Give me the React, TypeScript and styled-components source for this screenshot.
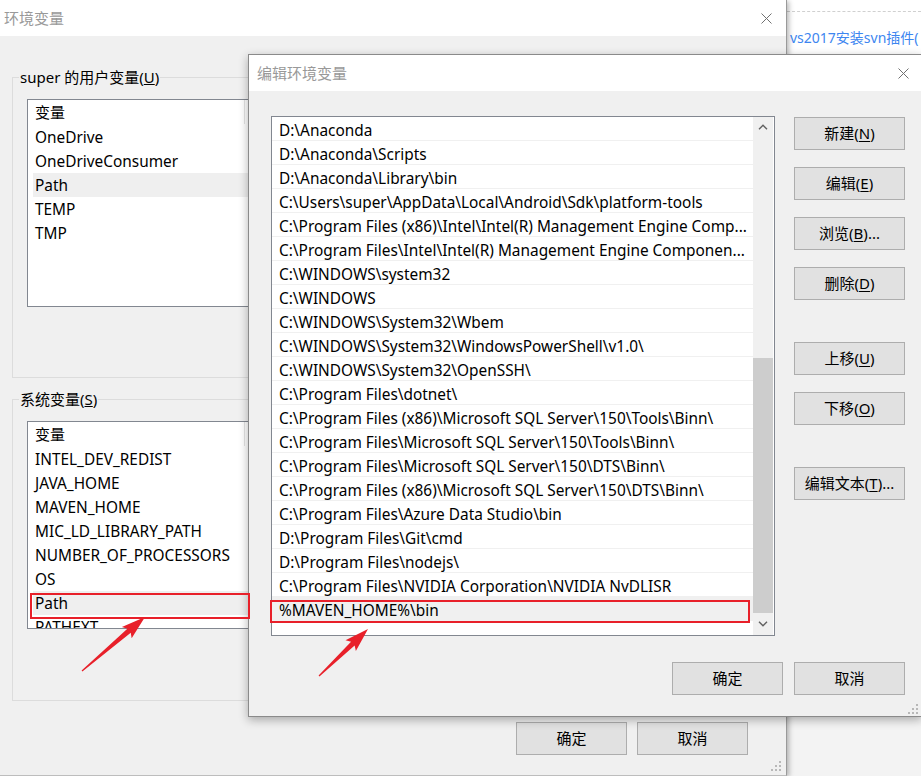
import React from "react";
import styled, { createGlobalStyle } from "styled-components";

const FONT = `"Noto Sans", "Noto Sans CJK SC", sans-serif`;

const GlobalStyle = createGlobalStyle`
  html, body { margin: 0; padding: 0; }
  body {
    width: 921px; height: 776px; overflow: hidden;
    background: #f3f3f3;
    font-family: ${FONT};
    font-size: 15px;
    color: #000;
  }
  * { box-sizing: border-box; }
`;

const Desktop = styled.div`
  position: relative;
  width: 921px;
  height: 776px;
  overflow: hidden;
  background: #f3f3f3;
`;

const WebScrap = styled.div`
  position: absolute;
  left: 787px;
  top: 0;
  width: 134px;
  height: 110px;
  background: #fff;
  display: flex;
  flex-direction: column;
`;

const DashedRule = styled.div`
  margin-top: 11px;
  height: 0;
  border-top: 1px dashed #d0d0d0;
`;

const WebLink = styled.div`
  margin: 15px 0 0 3px;
  line-height: 22px;
  font-size: 14px;
  color: #3d86f0;
  white-space: nowrap;
`;

const Window = styled.div`
  position: absolute;
  left: -8px;
  top: 0;
  width: 795px;
  height: 776px;
  display: flex;
  flex-direction: column;
  background: #f0f0f0;
  border-right: 1px solid #9a9a9a;
  border-bottom: 1px solid #bdbdbd;
  box-shadow: 2px 1px 5px rgba(0, 0, 0, 0.28);
`;

const Dialog = styled.div`
  position: absolute;
  left: 248px;
  top: 54px;
  width: 674px;
  height: 663px;
  display: flex;
  flex-direction: column;
  background: #f0f0f0;
  border: 1px solid #8a8a8a;
  box-shadow: 0 3px 9px rgba(0, 0, 0, 0.3);
`;

const TitleBar = styled.div<{ $left: number; $right: number }>`
  flex: none;
  height: 36px;
  background: #fff;
  display: flex;
  align-items: center;
  justify-content: space-between;
  padding: 0 ${(p) => p.$right}px 0 ${(p) => p.$left}px;
`;

const TitleText = styled.span`
  color: #999;
  font-size: 15px;
  line-height: 20px;
`;

const WindowBody = styled.div`
  flex: 1;
  display: flex;
  flex-direction: column;
  padding-left: 20px;
`;

const GroupBox = styled.div<{ $mt: number; $h: number }>`
  position: relative;
  margin-top: ${(p) => p.$mt}px;
  height: ${(p) => p.$h}px;
  width: 770px;
  border: 1px solid #dcdcdc;
  padding: 21px 0 0 14px;
`;

const GroupLegend = styled.span`
  position: absolute;
  left: 6px;
  top: -11px;
  padding: 0 1px;
  background: #f0f0f0;
  line-height: 20px;
  font-size: 15px;
  white-space: nowrap;
`;

const VarList = styled.div`
  width: 760px;
  height: 208px;
  border: 1px solid #828790;
  background: #fff;
  overflow: hidden;
  font-size: 15.4px;
`;

const VarHeader = styled.div`
  display: flex;
  height: 25px;
`;

const HeaderCell = styled.div`
  width: 217px;
  padding-left: 7px;
  line-height: 25px;
  border-right: 1px solid #e3e3e3;
  height: 24px;
  font-size: 15px;
`;

const VarRow = styled.div<{ $selected?: boolean }>`
  height: 24px;
  padding-top: 1px;
  line-height: 23px;
  margin-left: 5px;
  padding-left: 2px;
  white-space: nowrap;
  background: ${(p) => (p.$selected ? "#efefef" : "transparent")};
`;

const Footer = styled.div<{ $mt: number; $pr: number; $gap: number }>`
  display: flex;
  justify-content: flex-end;
  gap: ${(p) => p.$gap}px;
  margin-top: ${(p) => p.$mt}px;
  padding-right: ${(p) => p.$pr}px;
`;

const WinButton = styled.button<{ $mt?: number }>`
  flex: none;
  width: 111px;
  height: 33px;
  margin: ${(p) => p.$mt ?? 0}px 0 0 0;
  padding: 0 0 1px 0;
  border: 1px solid #adadad;
  background: #e1e1e1;
  font-family: ${FONT};
  font-size: 15px;
  color: #000;
  line-height: 20px;
  u { text-underline-offset: 2px; }
`;

const DialogBody = styled.div`
  flex: 1;
  display: flex;
  flex-direction: column;
  padding: 25px 16px 0 22px;
`;

const MainRow = styled.div`
  display: flex;
  gap: 19px;
`;

const PathList = styled.div`
  flex: none;
  width: 504px;
  height: 520px;
  display: flex;
  border: 1px solid #828790;
  background: #fff;
`;

const PathRows = styled.div`
  flex: 1;
  min-width: 0;
  overflow: hidden;
`;

const PathRow = styled.div<{ $selected?: boolean }>`
  height: 24px;
  padding: 3px 2px 0 7px;
  line-height: 22px;
  font-size: 15.4px;
  border-bottom: 1px solid #f0f0f0;
  white-space: nowrap;
  overflow: hidden;
  background: ${(p) => (p.$selected ? "#f0f0f0" : "#fff")};
`;

const ScrollBar = styled.div`
  flex: none;
  width: 20px;
  margin-right: 1px;
  display: flex;
  flex-direction: column;
  background: #f0f0f0;
`;

const ScrollArrow = styled.div<{ $h: number }>`
  height: ${(p) => p.$h}px;
  display: flex;
  align-items: center;
  justify-content: center;
`;

const ScrollGap = styled.div<{ $h: number }>`
  height: ${(p) => p.$h}px;
`;

const ScrollThumb = styled.div<{ $h: number }>`
  height: ${(p) => p.$h}px;
  background: #cdcdcd;
`;

const ButtonColumn = styled.div`
  display: flex;
  flex-direction: column;
  padding-top: 1px;
`;

const Grip = styled.svg<{ $r: number; $b: number }>`
  position: absolute;
  right: ${(p) => p.$r}px;
  bottom: ${(p) => p.$b}px;
  width: 10px;
  height: 10px;
`;

const Annotations = styled.svg`
  position: absolute;
  left: 0;
  top: 0;
  width: 921px;
  height: 776px;
  pointer-events: none;
`;

const CloseIcon = () => (
  <svg width="11" height="11" viewBox="0 0 11 11">
    <path d="M0.5 0.5 L10.5 10.5 M10.5 0.5 L0.5 10.5" stroke="#707070" strokeWidth="1" fill="none" />
  </svg>
);

const GripDots = ({ r, b }: { r: number; b: number }) => (
  <Grip $r={r} $b={b} viewBox="0 0 10 10">
    {[
      [8, 0],
      [4, 4],
      [8, 4],
      [0, 8],
      [4, 8],
      [8, 8],
    ].map(([x, y], i) => (
      <rect key={i} x={x} y={y} width="2" height="2" fill="#b8b8b8" />
    ))}
  </Grip>
);

const Chevron = ({ up }: { up: boolean }) => (
  <svg width="10" height="6" viewBox="0 0 10 6">
    <path
      d={up ? "M1 5.2 L5 1.2 L9 5.2" : "M1 0.8 L5 4.8 L9 0.8"}
      stroke="#606060"
      strokeWidth="1.4"
      fill="none"
    />
  </svg>
);

const Arrow = ({ tx, ty, fx, fy }: { tx: number; ty: number; fx: number; fy: number }) => {
  const dx = tx - fx;
  const dy = ty - fy;
  const len = Math.sqrt(dx * dx + dy * dy);
  const ang = (Math.atan2(dy, dx) * 180) / Math.PI;
  const pts = [
    [-len, -0.6],
    [-21, -2.6],
    [-24, -7.5],
    [0, 0],
    [-24, 7.5],
    [-21, 2.6],
    [-len, 0.6],
  ]
    .map(([x, y]) => `${x},${y}`)
    .join(" ");
  return (
    <g transform={`translate(${tx} ${ty}) rotate(${ang})`}>
      <polygon points={pts} fill="#e8202a" />
    </g>
  );
};

const userVars = ["OneDrive", "OneDriveConsumer", "Path", "TEMP", "TMP"];
const sysVars = [
  "INTEL_DEV_REDIST",
  "JAVA_HOME",
  "MAVEN_HOME",
  "MIC_LD_LIBRARY_PATH",
  "NUMBER_OF_PROCESSORS",
  "OS",
  "Path",
  "PATHEXT",
];

const paths = [
  "D:\\Anaconda",
  "D:\\Anaconda\\Scripts",
  "D:\\Anaconda\\Library\\bin",
  "C:\\Users\\super\\AppData\\Local\\Android\\Sdk\\platform-tools",
  "C:\\Program Files (x86)\\Intel\\Intel(R) Management Engine Comp...",
  "C:\\Program Files\\Intel\\Intel(R) Management Engine Componen...",
  "C:\\WINDOWS\\system32",
  "C:\\WINDOWS",
  "C:\\WINDOWS\\System32\\Wbem",
  "C:\\WINDOWS\\System32\\WindowsPowerShell\\v1.0\\",
  "C:\\WINDOWS\\System32\\OpenSSH\\",
  "C:\\Program Files\\dotnet\\",
  "C:\\Program Files (x86)\\Microsoft SQL Server\\150\\Tools\\Binn\\",
  "C:\\Program Files\\Microsoft SQL Server\\150\\Tools\\Binn\\",
  "C:\\Program Files\\Microsoft SQL Server\\150\\DTS\\Binn\\",
  "C:\\Program Files (x86)\\Microsoft SQL Server\\150\\DTS\\Binn\\",
  "C:\\Program Files\\Azure Data Studio\\bin",
  "D:\\Program Files\\Git\\cmd",
  "D:\\Program Files\\nodejs\\",
  "C:\\Program Files\\NVIDIA Corporation\\NVIDIA NvDLISR",
  "%MAVEN_HOME%\\bin",
];

const sideButtons: { label: string; key: string; tail?: string; mt: number }[] = [
  { label: "新建", key: "N", mt: 0 },
  { label: "编辑", key: "E", mt: 17 },
  { label: "浏览", key: "B", tail: "...", mt: 17 },
  { label: "删除", key: "D", mt: 17 },
  { label: "上移", key: "U", mt: 42 },
  { label: "下移", key: "O", mt: 17 },
  { label: "编辑文本", key: "T", tail: "...", mt: 42 },
];

export default function App() {
  return (
    <>
      <GlobalStyle />
      <Desktop>
        <WebScrap>
          <DashedRule />
          <WebLink>vs2017安装svn插件(</WebLink>
        </WebScrap>

        <Window>
          <TitleBar $left={12} $right={14}>
            <TitleText>环境变量</TitleText>
            <CloseIcon />
          </TitleBar>
          <WindowBody>
            <GroupBox $mt={41} $h={301}>
              <GroupLegend>
                super 的用户变量(<u>U</u>)
              </GroupLegend>
              <VarList>
                <VarHeader>
                  <HeaderCell>变量</HeaderCell>
                </VarHeader>
                {userVars.map((v) => (
                  <VarRow key={v} $selected={v === "Path"}>
                    {v}
                  </VarRow>
                ))}
              </VarList>
            </GroupBox>
            <GroupBox $mt={21} $h={302}>
              <GroupLegend>
                系统变量(<u>S</u>)
              </GroupLegend>
              <VarList>
                <VarHeader>
                  <HeaderCell>变量</HeaderCell>
                </VarHeader>
                {sysVars.map((v) => (
                  <VarRow key={v} $selected={v === "Path"}>
                    {v}
                  </VarRow>
                ))}
              </VarList>
            </GroupBox>
            <Footer $mt={21} $pr={38} $gap={10}>
              <WinButton>确定</WinButton>
              <WinButton>取消</WinButton>
            </Footer>
          </WindowBody>
          <GripDots r={5} b={4} />
        </Window>

        <Dialog>
          <TitleBar $left={8} $right={12}>
            <TitleText>编辑环境变量</TitleText>
            <CloseIcon />
          </TitleBar>
          <DialogBody>
            <MainRow>
              <PathList>
                <PathRows>
                  {paths.map((p, i) => (
                    <PathRow key={p} $selected={i === paths.length - 1}>
                      {p}
                    </PathRow>
                  ))}
                </PathRows>
                <ScrollBar>
                  <ScrollArrow $h={20}>
                    <Chevron up />
                  </ScrollArrow>
                  <ScrollGap $h={221} />
                  <ScrollThumb $h={255} />
                  <ScrollArrow $h={22}>
                    <Chevron up={false} />
                  </ScrollArrow>
                </ScrollBar>
              </PathList>
              <ButtonColumn>
                {sideButtons.map((b) => (
                  <WinButton key={b.key} $mt={b.mt}>
                    {b.label}(<u>{b.key}</u>){b.tail ?? ""}
                  </WinButton>
                ))}
              </ButtonColumn>
            </MainRow>
            <Footer $mt={26} $pr={0} $gap={11}>
              <WinButton>确定</WinButton>
              <WinButton>取消</WinButton>
            </Footer>
          </DialogBody>
          <GripDots r={3} b={2} />
        </Dialog>

        <Annotations viewBox="0 0 921 776">
          <rect x="31" y="594" width="218" height="24" fill="none" stroke="#e8202a" strokeWidth="2" />
          <rect x="271" y="601" width="478" height="21" fill="none" stroke="#e8202a" strokeWidth="2" />
          <Arrow fx={82} fy={671} tx={145} ty={617} />
          <Arrow fx={319} fy={676} tx={368} ty={629} />
        </Annotations>
      </Desktop>
    </>
  );
}
